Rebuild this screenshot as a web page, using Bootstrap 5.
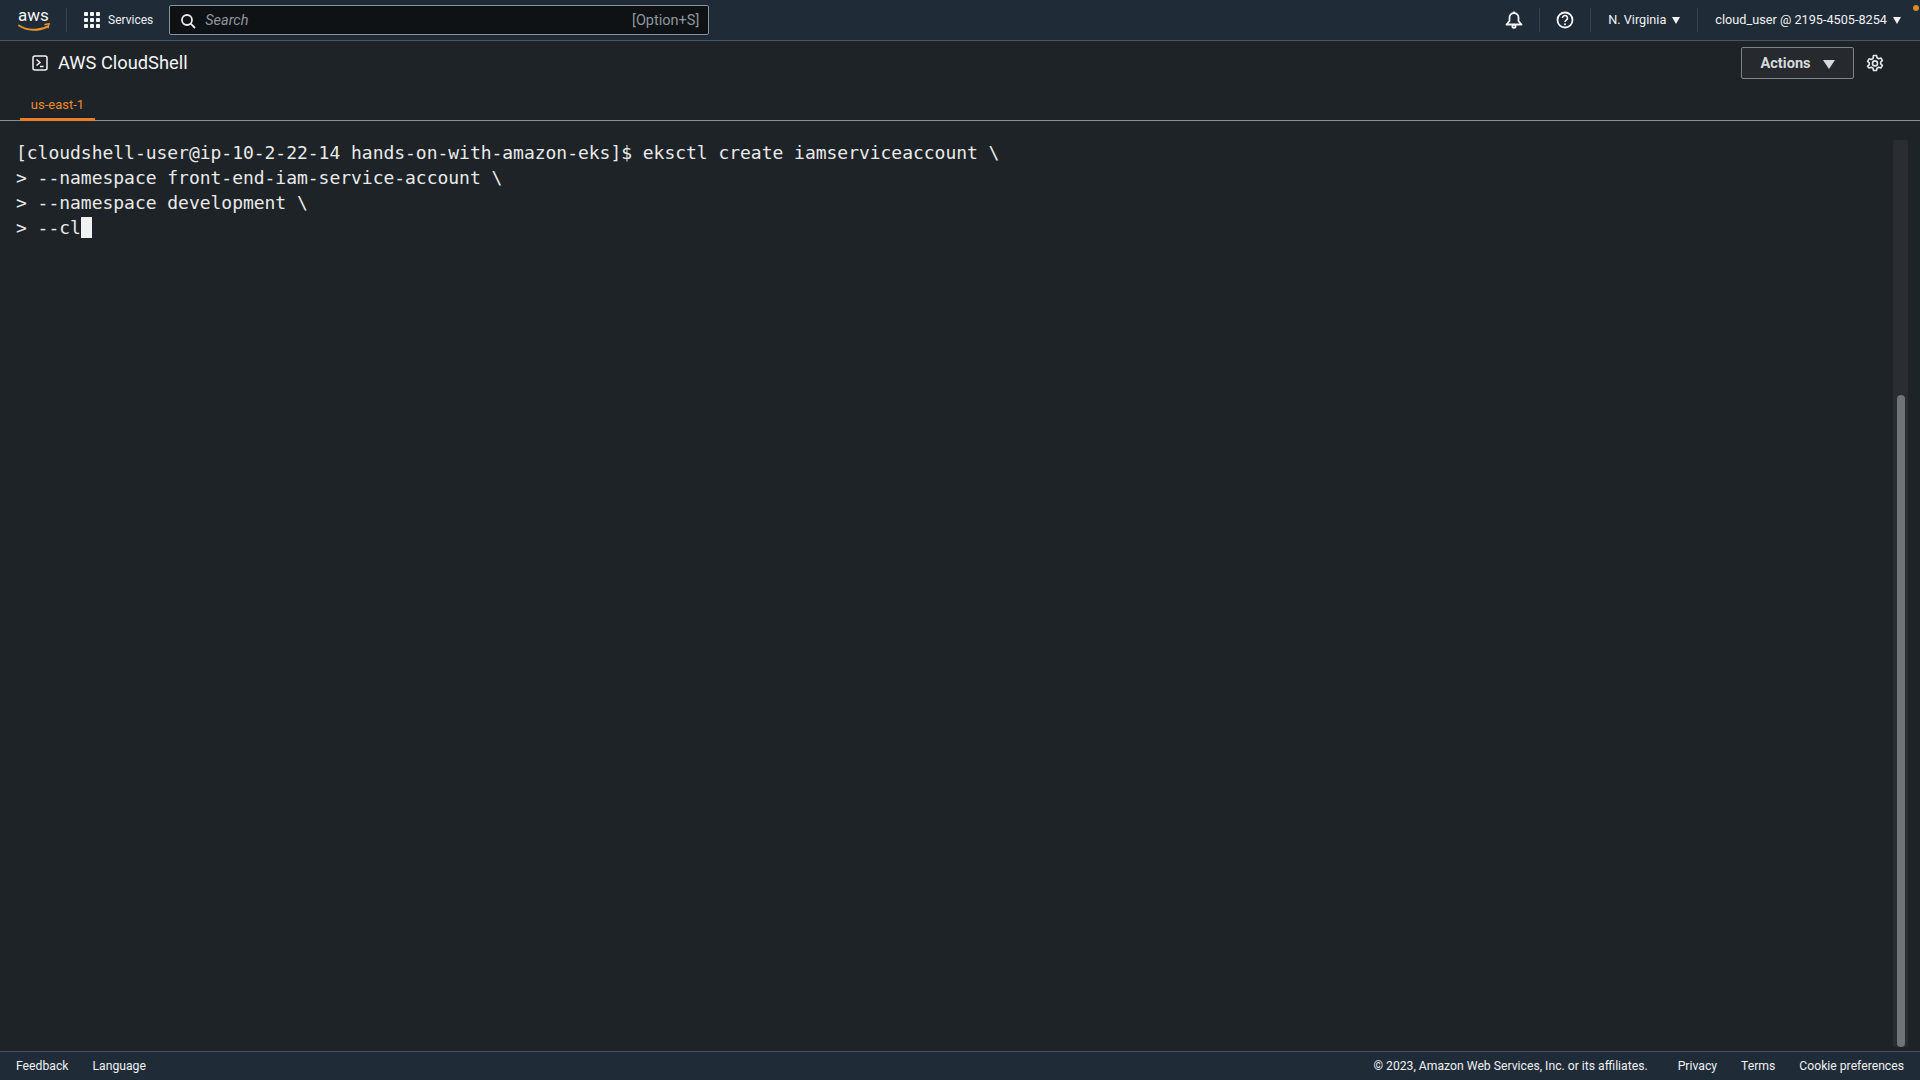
<!DOCTYPE html>
<html lang="en"><head><meta charset="utf-8"><title>AWS CloudShell</title>
<link href="https://cdn.jsdelivr.net/npm/bootstrap@5.3.0/dist/css/bootstrap.min.css" rel="stylesheet">
<style>
html,body{height:100%;overflow:hidden}
body{background:#1e2327;color:#f0f2f3;font-family:Roboto,"Noto Sans",sans-serif;font-size:12px}
.shell{height:1080px}
.topbar{height:41px;background:#202b38;border-bottom:1px solid #4a5560;padding-left:18px;padding-right:19px;color:#eef0f1}
.logo{width:34px;height:30px}
.vsep{width:1px;height:24px;background:#36424e}
.logosep{margin-left:14px;margin-right:16px}
.svc{font-size:12px;margin-left:7px;margin-right:16px}
.srch{width:540px;height:30px;background:#0e1215;border:1px solid #8a929a;border-radius:2px;padding:1px 9px 0 10px;color:#8f969d;font-size:14.5px}
.srch i{margin-left:9px}
.topright{font-size:12.7px;color:#f0f2f3}
.caret{width:0;height:0;border-left:4.5px solid transparent;border-right:4.5px solid transparent;border-top:7px solid currentColor;display:inline-block;margin-left:6px}
.titlebar{height:44px;padding-left:32px;padding-right:36px}
.ttl{font-size:18.3px;margin-left:10px;color:#f2f4f5}
.actbtn{height:32px;width:113px;background:#26292d;border:1px solid #7d858c;border-radius:2px;color:#d5dbdb;font-weight:700;font-size:14.6px;padding-top:2px!important}
.actbtn .caret{border-left-width:6px;border-right-width:6px;border-top-width:9px;margin-left:12px}
.gearwrap{margin-left:12px}
.tabrow{height:36px;border-bottom:1px solid #8a9096;padding-left:20px}
.tabitem{width:75px;height:36px;border-bottom:3px solid #e8802a;color:#ee8a2e;font-size:13px;text-align:center;line-height:39px}
.termarea{min-height:0;padding:19px 12px 4px 16px}
.termtext{font-family:"DejaVu Sans Mono",monospace;font-size:18px;line-height:25px;color:#e9eaea;white-space:pre;letter-spacing:-.03px}
.cursor{display:inline-block;width:11px;height:21px;background:#f1f2f2;vertical-align:-4px}
.track{width:15px;background:#2a2e32;border-radius:2px;padding-top:255px;padding-left:4px;padding-right:3px;display:flex}
.thumb{flex-grow:1;background:#6f7478;border-radius:4px}
.footbar{height:29px;background:#202b38;border-top:1px solid #4a5560;padding:1px 16px 0;font-size:12.2px;color:#eef0f1}
</style></head><body>
<div class="shell d-flex flex-column">
 <div class="topbar d-flex align-items-center">
  <svg class="logo" viewBox="0 -2 34 30" fill="none">
   <text x="0" y="14" font-family="Roboto,sans-serif" font-size="17" fill="#f4f5f5">aws</text>
   <path d="M1 18.500c8 5.500 20 5.500 28.500 1" stroke="#e8912d" stroke-width="2" stroke-linecap="round"/>
   <path d="M27 17.500l4-.8-1 4" stroke="#e8912d" stroke-width="1.500" stroke-linecap="round"/>
  </svg>
  <span class="vsep logosep"></span>
  <svg width="18" height="18" viewBox="0 0 18 18" fill="#f4f5f5"><rect x="1" y="1" width="4" height="4" rx=".8"/><rect x="7" y="1" width="4" height="4" rx=".8"/><rect x="13" y="1" width="4" height="4" rx=".8"/><rect x="1" y="7" width="4" height="4" rx=".8"/><rect x="7" y="7" width="4" height="4" rx=".8"/><rect x="13" y="7" width="4" height="4" rx=".8"/><rect x="1" y="13" width="4" height="4" rx=".8"/><rect x="7" y="13" width="4" height="4" rx=".8"/><rect x="13" y="13" width="4" height="4" rx=".8"/></svg>
  <span class="svc">Services</span>
  <div class="srch d-flex align-items-center">
   <svg width="16" height="16" viewBox="0 0 16 16" fill="none" stroke="#e9ebec" stroke-width="1.800"><circle cx="7" cy="7" r="5"/><path d="M10.700 10.700L15 15"/></svg>
   <i>Search</i><span class="ms-auto">[Option+S]</span>
  </div>
  <div class="topright ms-auto d-flex align-items-center">
   <svg width="18" height="18" viewBox="0 0 18 18" fill="none" stroke="#f4f5f5" stroke-width="1.800"><path d="M1.500 13.500h15L13.500 10V6.500a4.500 4.500 0 0 0-9 0V10z" stroke-linejoin="round"/><circle cx="9" cy="15.300" r="1.600"/><path d="M9 .5v1.500"/></svg>
   <span class="vsep ms-3 me-3"></span>
   <svg width="18" height="18" viewBox="0 0 18 18" fill="none" stroke="#f4f5f5" stroke-width="1.800"><circle cx="9" cy="9" r="7.500"/><path d="M6.500 7a2.500 2.500 0 1 1 3.800 2.100C9.400 9.700 9 10.100 9 11" stroke-width="1.600"/><circle cx="9" cy="13.200" r="1" fill="#f4f5f5" stroke="none"/></svg>
   <span class="vsep ms-3" style="margin-right:17px"></span>
   <span>N. Virginia</span><span class="caret"></span>
   <span class="vsep" style="margin-left:17px;margin-right:17px"></span>
   <span>cloud_user @ 2195-4505-8254</span><span class="caret"></span>
  </div>
 </div>
 <div class="titlebar d-flex align-items-center">
  <svg width="16" height="16" viewBox="0 0 16 16" fill="none" stroke="#f4f5f5" stroke-width="1.500"><rect x="1" y="1" width="14" height="14" rx="2"/><path d="M4.500 4.500L8 7.500l-3.500 3M8 11.500h3.500"/></svg>
  <span class="ttl">AWS CloudShell</span>
  <button type="button" class="actbtn btn p-0 ms-auto d-flex align-items-center justify-content-center">Actions<span class="caret"></span></button>
  <span class="gearwrap d-flex"><svg width="18" height="18" viewBox="0 0 18 18" fill="none" stroke="#e3e6e8" stroke-width="1.600"><path d="M7.500 1.500h3l.5 2.200 1.700 1 2.200-.7 1.500 2.600-1.700 1.500v1.800l1.700 1.500-1.500 2.600-2.200-.7-1.700 1-.5 2.200h-3l-.5-2.200-1.700-1-2.200.7L1.600 12.200l1.700-1.500V8.900L1.600 7.400 3.100 4.800l2.200.7 1.700-1z" stroke-linejoin="round"/><circle cx="9" cy="9.400" r="2.500"/></svg></span>
 </div>
 <div class="tabrow"><div class="tabitem">us-east-1</div></div>
 <div class="termarea flex-grow-1 d-flex justify-content-between">
  <div class="termtext">[cloudshell-user@ip-10-2-22-14 hands-on-with-amazon-eks]$ eksctl create iamserviceaccount \
&gt; --namespace front-end-iam-service-account \
&gt; --namespace development \
&gt; --cl<span class="cursor"></span></div>
  <div class="track"><div class="thumb"></div></div>
 </div>
 <div class="footbar d-flex align-items-center">
  <span>Feedback</span><span style="margin-left:24px">Language</span>
  <span class="ms-auto">© 2023, Amazon Web Services, Inc. or its affiliates.</span>
  <span style="margin-left:30px">Privacy</span><span style="margin-left:24px">Terms</span><span style="margin-left:24px">Cookie preferences</span>
 </div>
</div>
<svg class="position-absolute top-0 end-0" width="12" height="12" viewBox="0 0 12 12"><circle cx="8" cy="8" r="3" fill="#d98a2b"/></svg>
<script src="https://cdn.jsdelivr.net/npm/bootstrap@5.3.0/dist/js/bootstrap.bundle.min.js"></script>
</body></html>
